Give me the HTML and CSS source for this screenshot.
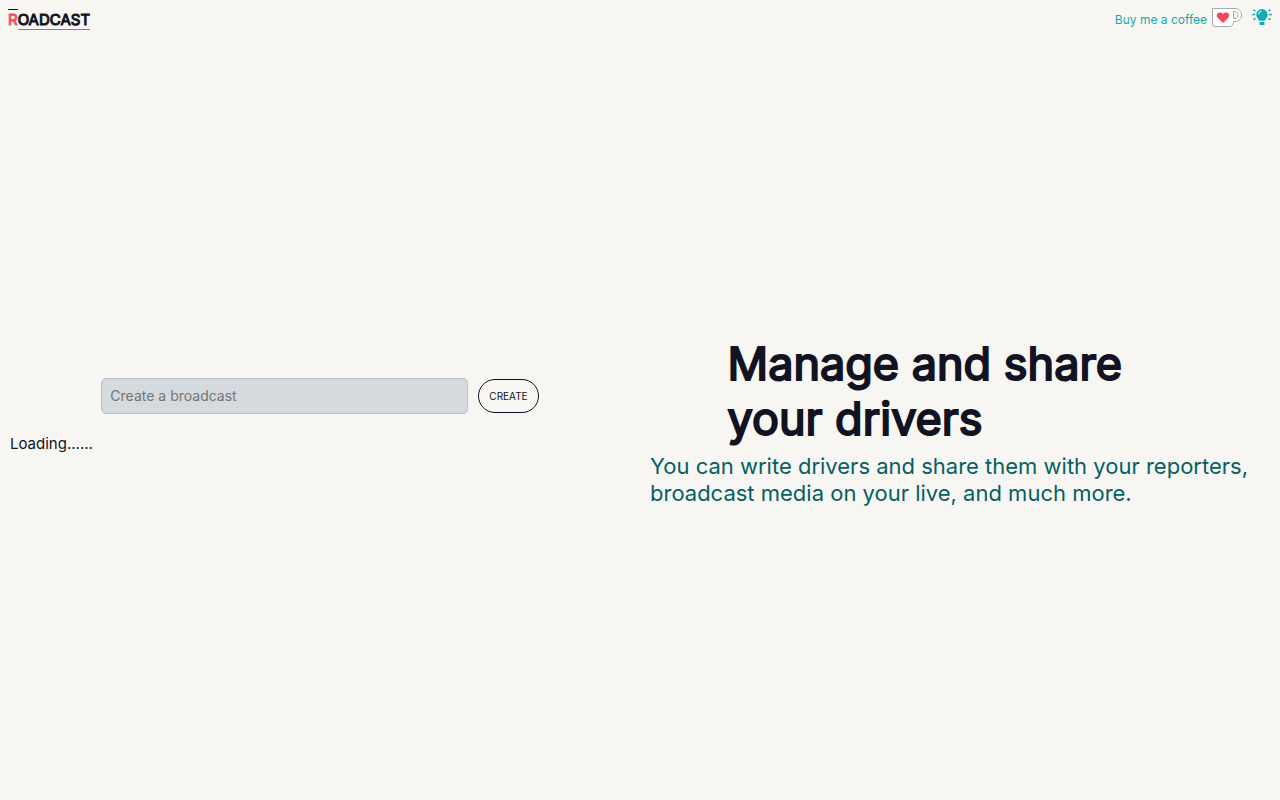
FILE: index.html
```html
<!DOCTYPE html>
<html lang="en">
<head>
<meta charset="utf-8">
<title>Roadcast</title>
<link rel="stylesheet" href="styles.css">
</head>
<body>
<header class="topbar">
  <a class="logo" href="#"><span class="logo-first">R</span><span class="logo-rest">OADCAST</span></a>
  <div class="actions">
    <a class="coffee" href="#">Buy me a coffee
      <svg class="cup" viewBox="0 0 32 20" aria-hidden="true">
        <path d="M1.500 1.500H24C28 1.500 30.500 4.500 30.500 8S28 14.500 24 14.500H22.500C22.500 17 21 19.500 19 19.500H4Q1.500 19.500 1.500 17Z" fill="#fff" stroke="#a9a9ae"/>
        <path d="M22.500 4.500H24C26 4.500 27 6 27 8S26 11.500 24 11.500H22.500Z" fill="#f7f6f2" stroke="#a9a9ae"/>
        <path d="M12 16L6.500 10.500C4 7 8.500 3.500 12 7C15.500 3.500 20 7 17.500 10.500Z" fill="#f5455c"/>
      </svg>
    </a>
    <button class="theme" type="button" aria-label="Toggle theme">
      <svg class="bulb" viewBox="0 0 24 24" aria-hidden="true">
        <path d="M1 9C2 0 22 0 23 9Z" fill="#fff"/>
        <path d="M12 4a5.800 5.800 0 0 0-5.800 5.800c0 2.500 2 3.500 3 6h5.600c1-2.500 3-3.500 3-6A5.800 5.800 0 0 0 12 4ZM9.500 17h5v3h-5Z" fill="#16a9ad"/>
        <path d="M2 9.500h3M19 9.500h3M3.500 5l2 1M20.500 5l-2 1M3.500 14.500l2-1M20.500 14.500l-2-1" fill="none" stroke="#16a9ad" stroke-width="1.500"/>
        <path d="M8.500 9.500q0-3 3-3.500" fill="none" stroke="#fff"/>
      </svg>
    </button>
  </div>
</header>
<main class="main">
  <section class="panel">
    <form class="create">
      <input class="field" type="text" placeholder="Create a broadcast" aria-label="Create a broadcast">
      <button class="submit" type="button">CREATE</button>
    </form>
    <p class="loading">Loading......</p>
  </section>
  <section class="intro">
    <h1 class="title">Manage and share your drivers</h1>
    <p class="lead">You can write drivers and share them with your reporters, broadcast media on your live, and much more.</p>
  </section>
</main>
</body>
</html>
```
FILE: styles.css
```css
* { box-sizing: border-box; }
body {
  margin: 0;
  min-height: 100vh;
  display: flex;
  flex-direction: column;
  background: #f7f6f2;
  color: #111322;
  font: 15px/20px Inter, sans-serif;
}
.topbar {
  display: flex;
  justify-content: space-between;
  align-items: center;
  height: 39px;
  padding: 0 6px 0 8px;
}
.logo {
  display: flex;
  color: #111322;
  font-size: 15px;
  line-height: 19px;
  font-weight: 400;
  -webkit-text-stroke: 1px currentColor;
  text-decoration: none;
}
.logo-first { color: #f0506a; border-top: 1px solid #111322; }
.logo-rest { border-bottom: 1px solid #f0506a; border-top: 1px solid transparent; }
.actions { display: flex; align-items: center; gap: 7px; }
.coffee {
  display: flex;
  align-items: center;
  gap: 4px;
  color: #16a9ad;
  font-size: 12px;
  text-decoration: none;
}
.cup { width: 32px; height: 20px; margin-bottom: 5px; }
.theme { display: flex; padding: 0; border: 0; background: none; }
.bulb { width: 24px; height: 24px; margin-bottom: 6px; }
.main {
  flex: 1;
  display: grid;
  grid-template-columns: 1fr 1fr;
  align-items: center;
}
.panel { padding: 0 10px 8px; }
.create { display: flex; justify-content: center; align-items: center; gap: 10px; }
.field {
  width: 367px;
  height: 36px;
  padding: 0 8px;
  border: 1px solid #b8bec8;
  border-radius: 5px;
  background: #d5dade;
  color: inherit;
  font: inherit;
  font-size: 14px;
}
.field::placeholder { color: #757575; }
.submit {
  height: 34px;
  padding: 0 10px;
  border: 1px solid #111322;
  border-radius: 17px;
  background: transparent;
  color: #111322;
  font: 10px/16px Inter, sans-serif;
}
.loading { margin: 20px 0 0; }
.intro { padding: 3px 10px 0; }
.title {
  width: 75%;
  margin: 0 auto;
  font-size: 45px;
  line-height: 55px;
  font-weight: 400;
  -webkit-text-stroke: 2px currentColor;
}
.lead { margin: 7px 0 0; color: #065f62; font-size: 22px; line-height: 27px; }
```
